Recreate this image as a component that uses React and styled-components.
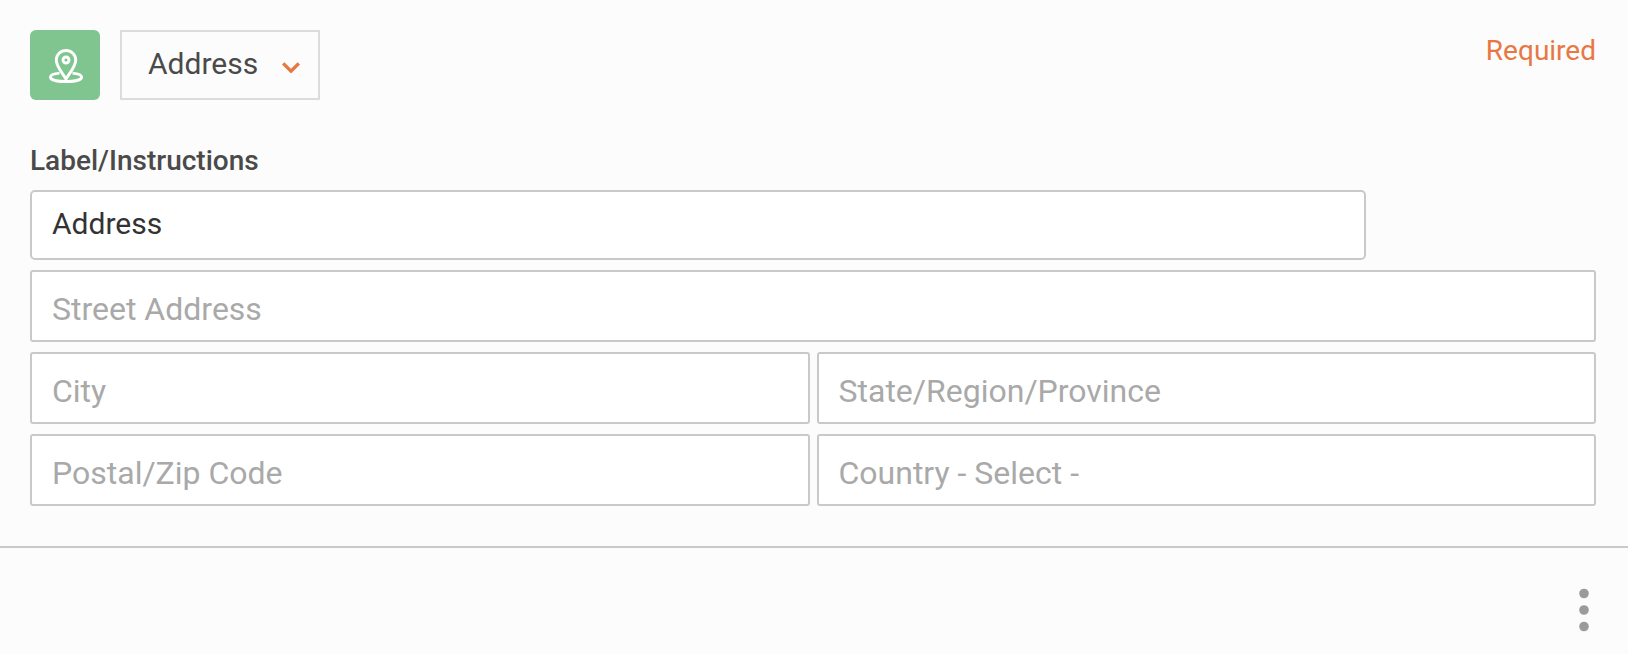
import React from "react";
import styled, { createGlobalStyle } from "styled-components";

const GlobalStyle = createGlobalStyle`
  *, *::before, *::after { box-sizing: border-box; }
  body {
    margin: 0;
    background: #fcfcfc;
    color: #4a4a4a;
    font-family: Roboto, "Liberation Sans", sans-serif;
  }
`;

const FieldEditor = styled.section`
  padding: 30px 32px 40px 30px;
  border-bottom: 2px solid #c9c9c9;
`;

const Header = styled.header`
  display: flex;
  align-items: flex-start;
  gap: 20px;
`;

const TypeBadge = styled.span`
  display: flex;
  width: 70px;
  height: 70px;
  border-radius: 6px;
  background: #80c58f;
`;

const TypePicker = styled.div`
  display: grid;
  width: 200px;
  align-items: center;
  border: 2px solid #dcdcdc;

  > * { grid-area: 1 / 1; }
`;

const TypeSelect = styled.select`
  appearance: none;
  width: 100%;
  height: 66px;
  padding: 0 56px 2px 26px;
  border: 0;
  background: transparent;
  color: #4a4a4a;
  font: 400 30px/36px Roboto, "Liberation Sans", sans-serif;
`;

const Chevron = styled.svg`
  justify-self: end;
  margin-right: 18px;
  margin-top: 6px;
  pointer-events: none;
`;

const Required = styled.span`
  margin-left: auto;
  padding-top: 5px;
  color: #e87842;
  font-size: 28px;
  line-height: 32px;
`;

const FieldLabel = styled.label`
  display: block;
  margin: 45px 0 13px;
  font-size: 28px;
  font-weight: 500;
  line-height: 32px;
`;

const LabelInput = styled.input`
  display: block;
  width: calc(100% - 230px);
  height: 70px;
  padding: 0 20px 4px;
  border: 2px solid #c9c9c9;
  border-radius: 5px;
  background: #fff;
  color: #333;
  font: 400 30px/36px Roboto, "Liberation Sans", sans-serif;
`;

const AddressGrid = styled.div`
  display: grid;
  grid-template-columns: 1fr 1fr;
  gap: 10px 7px;
  margin-top: 10px;
`;

const AddressInput = styled.input`
  grid-column: ${({ $wide }) => ($wide ? "1 / -1" : "auto")};
  appearance: none;
  min-width: 0;
  width: 100%;
  height: 72px;
  padding: 6px 20px 0;
  border: 2px solid #c9c9c9;
  border-radius: 3px;
  background: #fff;
  color: #a9a9a9;
  font: 400 32px/38px Roboto, "Liberation Sans", sans-serif;

  &::placeholder { color: #a9a9a9; opacity: 1; }
`;

const Footer = styled.footer`
  display: flex;
  justify-content: flex-end;
  padding: 35px 33px 16px;
`;

const MenuButton = styled.button`
  display: flex;
  padding: 5px 6px;
  border: 0;
  background: transparent;
  cursor: pointer;
`;

const PinIcon = () => (
  <svg width="70" height="70" viewBox="0 0 70 70" fill="none" stroke="#fff" strokeWidth="2.9" strokeLinejoin="round" aria-hidden="true">
    <path d="M36 49.2C32.8 43 26.3 36.8 26.3 30.2a9.7 9.7 0 0 1 19.4 0C45.7 36.8 39.2 43 36 49.2Z" />
    <circle cx="36" cy="30" r="3" />
    <path d="M29.5 43.1C24 43.5 20.4 45.1 20.4 47.2c0 2.5 6.9 4.3 15.6 4.3s15.6-1.8 15.6-4.3c0-2.1-3.6-3.7-9.1-4.1" />
  </svg>
);

export default function App() {
  return (
    <main>
      <GlobalStyle />
      <FieldEditor>
        <Header>
          <TypeBadge><PinIcon /></TypeBadge>
          <TypePicker>
            <TypeSelect aria-label="Field type" defaultValue="address">
              <option value="address">Address</option>
            </TypeSelect>
            <Chevron width="18" height="12" viewBox="0 0 18 12" fill="none" stroke="#e87842" strokeWidth="3.4" aria-hidden="true">
              <path d="M1.2 1.4 9 9.2l7.8-7.8" />
            </Chevron>
          </TypePicker>
          <Required>Required</Required>
        </Header>
        <FieldLabel htmlFor="field-label">Label/Instructions</FieldLabel>
        <LabelInput id="field-label" type="text" defaultValue="Address" />
        <AddressGrid>
          <AddressInput $wide aria-label="Street Address" placeholder="Street Address" />
          <AddressInput aria-label="City" placeholder="City" />
          <AddressInput aria-label="State/Region/Province" placeholder="State/Region/Province" />
          <AddressInput aria-label="Postal/Zip Code" placeholder="Postal/Zip Code" />
          <AddressInput as="select" aria-label="Country" defaultValue="">
            <option value="">Country - Select -</option>
          </AddressInput>
        </AddressGrid>
      </FieldEditor>
      <Footer>
        <MenuButton type="button" aria-label="More options">
          <svg width="10" height="44" viewBox="0 0 10 44" fill="#9b9b9b" aria-hidden="true">
            <circle cx="5" cy="5.5" r="4.8" />
            <circle cx="5" cy="22" r="4.8" />
            <circle cx="5" cy="38.5" r="4.8" />
          </svg>
        </MenuButton>
      </Footer>
    </main>
  );
}
